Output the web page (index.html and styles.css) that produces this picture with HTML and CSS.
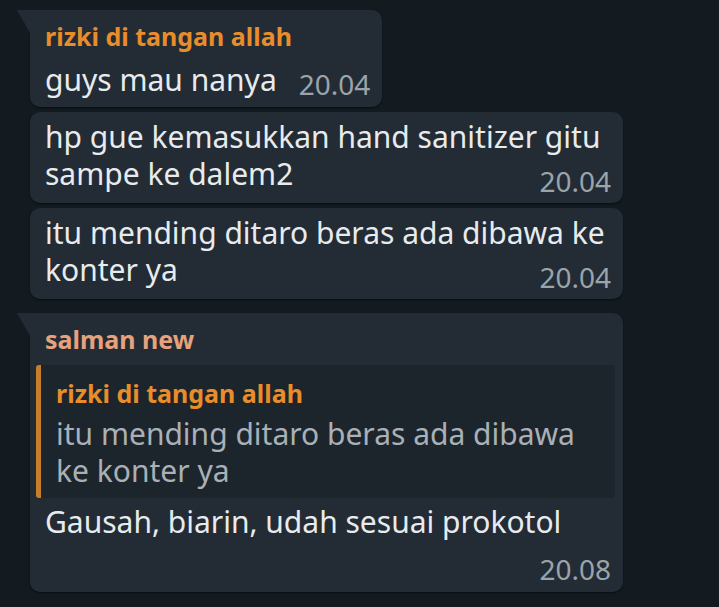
FILE: index.html
```html
<!DOCTYPE html>
<html lang="id">
<head>
<meta charset="utf-8">
<title>Chat</title>
<link rel="stylesheet" href="styles.css">
</head>
<body>
<main class="chat">
  <section class="group">
    <div class="bubble tail">
      <div class="name name-rizki">rizki di tangan allah</div>
      <div class="row short">
        <span class="text">guys mau nanya</span>
        <span class="time">20.04</span>
      </div>
    </div>
    <div class="bubble wide">
      <p class="line">hp gue kemasukkan hand sanitizer gitu</p>
      <div class="row">
        <span class="text">sampe ke dalem2</span>
        <span class="time">20.04</span>
      </div>
    </div>
    <div class="bubble wide">
      <p class="line">itu mending ditaro beras ada dibawa ke</p>
      <div class="row">
        <span class="text">konter ya</span>
        <span class="time">20.04</span>
      </div>
    </div>
  </section>
  <section class="group">
    <div class="bubble tail wide">
      <div class="name name-salman">salman new</div>
      <div class="reply">
        <div class="reply-name">rizki di tangan allah</div>
        <p class="reply-line">itu mending ditaro beras ada dibawa</p>
        <p class="reply-line">ke konter ya</p>
      </div>
      <p class="line main">Gausah, biarin, udah sesuai prokotol</p>
      <div class="row end">
        <span class="time">20.08</span>
      </div>
    </div>
  </section>
</main>
</body>
</html>
```

FILE: styles.css
```css
html, body {
  margin: 0;
  padding: 0;
  background: #131b21;
}

body {
  font-family: "Noto Sans", Roboto, sans-serif;
  color: #e8ebee;
  width: 719px;
  height: 607px;
  overflow: hidden;
}

.chat {
  display: flex;
  flex-direction: column;
  gap: 14px;
  padding: 10px 0 0 30px;
}

.group {
  display: flex;
  flex-direction: column;
  align-items: flex-start;
  gap: 5px;
}

.bubble {
  position: relative;
  background: #232c34;
  border-radius: 10px;
  box-shadow: 0 1px 2px rgba(0, 0, 0, 0.55);
  padding: 6px 12px 11px 15px;
  box-sizing: border-box;
}

.bubble.tail {
  border-top-left-radius: 0;
  padding-top: 11px;
  padding-bottom: 12px;
}

.bubble.tail::before {
  content: "";
  position: absolute;
  left: -13px;
  top: 0;
  width: 13px;
  height: 23px;
  background: #232c34;
  clip-path: polygon(0 0, 100% 0, 100% 100%);
}

.bubble.wide {
  width: 593px;
}

.name {
  font-size: 25px;
  font-weight: 700;
  line-height: 30px;
}

.name-rizki {
  color: #e98d2b;
  margin-bottom: 14px;
}

.name-salman {
  color: #e6a27c;
  margin-bottom: 11px;
}

.line {
  margin: 0;
  font-size: 30px;
  line-height: 37px;
}

.row {
  display: flex;
  align-items: flex-end;
  justify-content: space-between;
  font-size: 30px;
}

.row .text {
  line-height: 37px;
}

.row.short {
  gap: 22px;
}

.row.short .text {
  line-height: 30px;
}

.row.end {
  justify-content: flex-end;
  margin-top: 18px;
}

.time {
  color: #9ba3ab;
  line-height: 22px;
  font-size: 28px;
}

.reply {
  margin: 0 -4px 5px -9px;
  background: #1d252c;
  border-left: 5px solid #c97f2a;
  border-radius: 3px;
  padding: 13px 0 9px 15px;
}

.reply-name {
  color: #e98d2b;
  font-size: 25px;
  font-weight: 700;
  line-height: 30px;
  margin-bottom: 7px;
}

.reply-line {
  margin: 0;
  font-size: 30px;
  line-height: 37px;
  color: #a9b0b7;
}

.line.main {
  color: #e8ebee;
}
```
